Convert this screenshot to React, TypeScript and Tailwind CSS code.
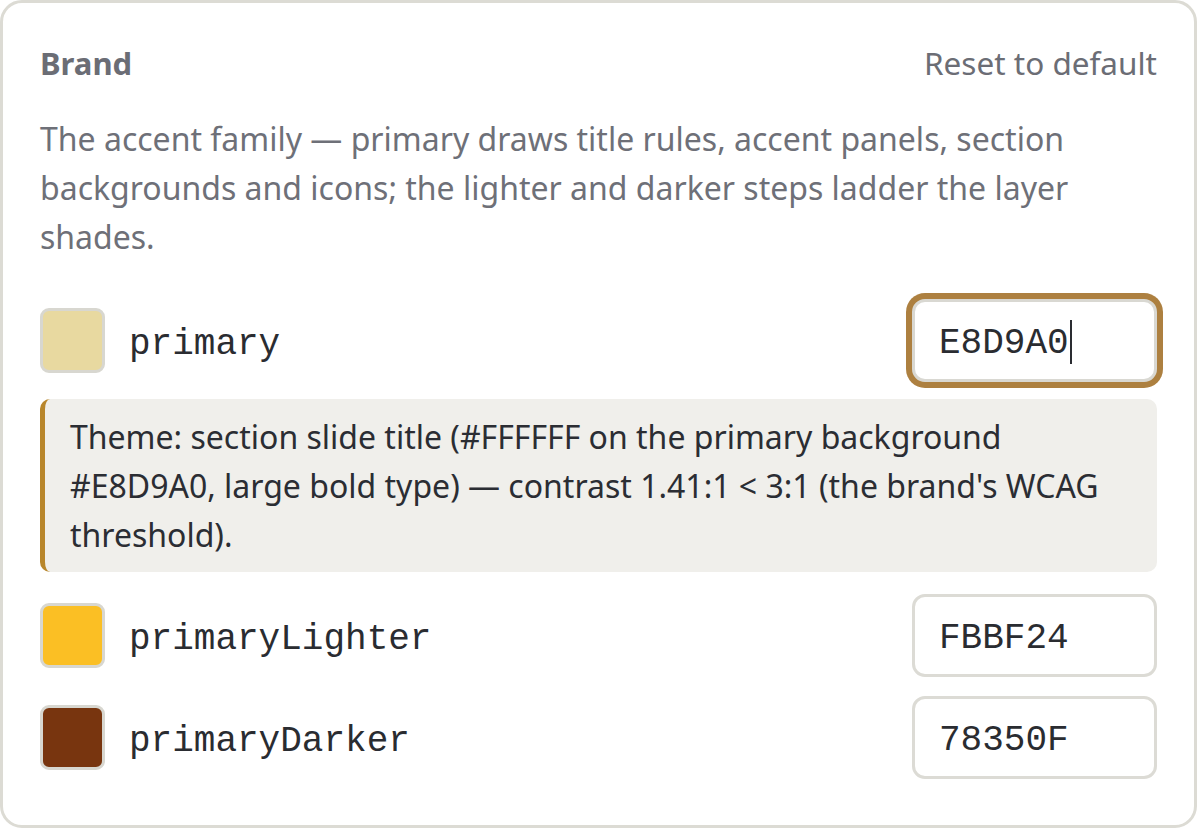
import React from "react";

const sans = { fontFamily: '"Noto Sans", "Open Sans", sans-serif' };

type Shade = {
  name: string;
  hex: string;
  swatch: string;
  focused?: boolean;
};

const shades: Shade[] = [
  { name: "primary", hex: "E8D9A0", swatch: "bg-[#e8d9a0]", focused: true },
  { name: "primaryLighter", hex: "FBBF24", swatch: "bg-[#fbbf24]" },
  { name: "primaryDarker", hex: "78350F", swatch: "bg-[#78350f]" },
];

function ShadeRow({ shade }: { shade: Shade }) {
  return (
    <div className="flex items-center justify-between">
      <div className="flex items-center gap-[24px]">
        <div
          className={`h-[65px] w-[65px] rounded-[9px] border-[3px] border-[#d8d7d0] ${shade.swatch}`}
        />
        <span className="pt-[9px] font-['Liberation_Mono',monospace] text-[36px] text-[#2a2c31]">
          {shade.name}
        </span>
      </div>
      <div
        className={
          shade.focused
            ? "flex h-[83px] w-[245px] items-center rounded-[13px] border-[3px] border-[#d9d8d2] bg-white pl-[24px] shadow-[0_0_0_6px_#ad8040]"
            : "flex h-[83px] w-[245px] items-center rounded-[13px] border-[3px] border-[#dcdbd5] bg-white pl-[24px]"
        }
      >
        <span className="pt-[7px] font-['Liberation_Mono',monospace] text-[36px] text-[#2a2c31]">
          {shade.hex}
        </span>
        {shade.focused && <span className="ml-[1px] mt-[3px] h-[44px] w-[2px] bg-[#2a2c31]" />}
      </div>
    </div>
  );
}

export default function App() {
  return (
    <div className="h-[828px] w-[1197px] bg-white" style={sans}>
      <div className="h-full rounded-[22px] border-[3px] border-[#dcdbd4] px-[37px] pt-[40px]">
        <div className="flex h-[40px] items-center justify-between">
          <h2 className="text-[31px] font-bold text-[#6b6d75]">Brand</h2>
          <button className="text-[31.5px] text-[#6b6d75]">Reset to default</button>
        </div>

        <p className="mt-[31px] text-[32px] leading-[49px] text-[#6e7078]">
          The accent family — primary draws title rules, accent panels, section backgrounds and
          icons; the lighter and darker steps ladder the layer shades.
        </p>

        <div className="mt-[38px]">
          <ShadeRow shade={shades[0]} />
        </div>

        <div className="mt-[17px] rounded-[10px] border-l-[5px] border-[#b8862b] bg-[#f0efeb] py-[13px] pl-[25px] pr-[25px] text-[32px] leading-[49px] text-[#2b2d33]">
          Theme: section slide title (#FFFFFF on the primary background #E8D9A0, large bold type)
          — contrast 1.41:1 &lt; 3:1 (the brand's WCAG threshold).
        </div>

        <div className="mt-[22px]">
          <ShadeRow shade={shades[1]} />
        </div>
        <div className="mt-[19px]">
          <ShadeRow shade={shades[2]} />
        </div>
      </div>
    </div>
  );
}
